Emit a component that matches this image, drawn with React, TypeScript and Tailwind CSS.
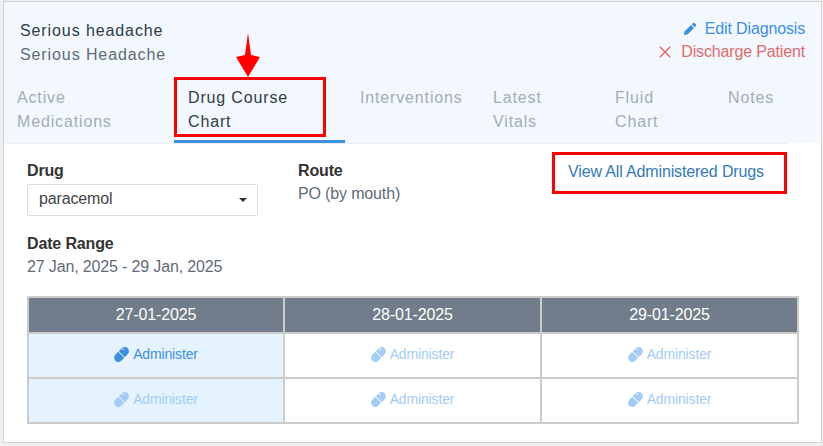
const TABS = [
  { label: "Active Medications", w: "w-[170px]", pad: "pl-[13px]" },
  { label: "Drug Course Chart", w: "w-[171px]", pad: "pl-[14px]", active: true },
  { label: "Interventions", w: "w-[134px]", pad: "pl-[15px]" },
  { label: "Latest Vitals", w: "w-[122px]", pad: "pl-[14px]" },
  { label: "Fluid Chart", w: "w-[113px]", pad: "pl-[14px]" },
  { label: "Notes", w: "w-[74px]", pad: "pl-[14px]" },
];

const DATES = ["27-01-2025", "28-01-2025", "29-01-2025"];

function PillIcon({ className }: { className: string }) {
  return (
    <svg viewBox="0 0 16 16" className={className} fill="currentColor">
      <g transform="rotate(-45 8 8)">
        <path d="M7.5 3.5H3.2a4.5 4.5 0 0 0 0 9h4.3z" />
        <path
          fillRule="evenodd"
          d="M8.5 3.5h4.3a4.5 4.5 0 0 1 0 9H8.500zM12.200 5.200a.9.9 0 1 0 1.800 0 .9.9 0 1 0-1.800 0z"
        />
      </g>
    </svg>
  );
}

function PencilIcon() {
  return (
    <svg viewBox="0 0 14 14" className="h-[14px] w-[14px]" fill="currentColor">
      <path d="M10 1a1 1 0 0 1 1.400 0l1.600 1.600a1 1 0 0 1 0 1.400l-1.200 1.200-3-3z" />
      <path d="M8 3l3 3-6.500 6.500-3.500.5.500-3.500z" />
    </svg>
  );
}

function CrossIcon() {
  return (
    <svg viewBox="0 0 12 12" className="h-[12px] w-[12px]" stroke="currentColor" strokeWidth="1.500" fill="none">
      <path d="M.8.8l10.400 10.400M11.200.8L.8 11.200" />
    </svg>
  );
}

function Cell({ active, strong }: { active?: boolean; strong?: boolean }) {
  return (
    <td className={`h-[45px] border-2 border-[#cccccc] p-0 pt-[2px] text-center ${active ? "bg-[#e4f3fe]" : "bg-white"}`}>
      <span className={`inline-flex items-center gap-[4px] text-[14px] ${strong ? "text-[#3d8fe0]" : "text-[#a3cdf4]"}`}>
        <PillIcon className="h-[15px] w-[15px]" />
        Administer
      </span>
    </td>
  );
}

export default function App() {
  return (
    <div className="relative h-[446px] w-[823px] overflow-hidden bg-[#f0f0f0] pl-[3px] pt-[1px] font-['Liberation_Sans',sans-serif] text-[16px] tracking-[-0.15px] text-[#5f6b78]">
      <div className="h-[442px] w-[819px] border border-[#d2d2d2] bg-white">
        <div className="h-[141px] bg-[#f2f8fe]">
          <div className="flex justify-between pl-[16px] pr-[16px] pt-[15px]">
            <div className="pt-[2px] leading-[24px] tracking-[0.9px]">
              <div className="text-[#2f3b47]">Serious headache</div>
              <div>Serious Headache</div>
            </div>
            <div className="flex flex-col items-end leading-[23px]">
              <span className="flex items-center gap-[8px] text-[#3d8fe0]">
                <PencilIcon />
                Edit Diagnosis
              </span>
              <span className="flex items-center gap-[10px] text-[#e06a6a]">
                <CrossIcon />
                Discharge Patient
              </span>
            </div>
          </div>
          <div className="mt-[19px] flex w-[784px] border-b border-[#e8eef3] leading-[24px] tracking-[0.85px]">
            {TABS.map((t) => (
              <div
                key={t.label}
                className={`${t.w} ${t.pad} h-[57px] shrink-0 border-b-[3px] pr-[30px] ${
                  t.active ? "border-[#3d8fe0] text-[#2f3b47]" : "border-transparent text-[#a3adb8]"
                }`}
              >
                {t.label}
              </div>
            ))}
          </div>
        </div>

        <div className="px-[23px] pt-[17px]">
          <div className="flex">
            <div className="w-[271px]">
              <div className="mb-[2px] font-bold leading-[22px] text-[#333333]">Drug</div>
              <div className="flex h-[32px] w-[231px] items-center justify-between rounded-[2px] border border-[#dddddd] pb-[2px] pl-[11px] pr-[10px] text-[#444444]">
                paracemol
                <span className="mt-[2px] h-0 w-0 border-x-[4px] border-t-[4px] border-x-transparent border-t-[#333333]" />
              </div>
            </div>
            <div>
              <div className="mb-[1px] font-bold leading-[22px] text-[#333333]">Route</div>
              <div className="leading-[22px]">PO (by mouth)</div>
            </div>
            <div className="ml-[168px] mt-[1px] leading-[22px] text-[#337ab7]">View All Administered Drugs</div>
          </div>

          <div className="mt-[17px] font-bold leading-[22px] text-[#333333]">Date Range</div>
          <div className="leading-[24px]">27 Jan, 2025 - 29 Jan, 2025</div>

          <table className="mt-[17px] w-[772px] table-fixed border-collapse">
            <thead>
              <tr>
                {DATES.map((d, i) => (
                  <th
                    key={d}
                    className={`h-[36px] border-2 border-[#cccccc] bg-[#717d8a] p-0 font-normal text-white ${
                      i === 0 ? "w-[256px]" : i === 1 ? "w-[257px]" : ""
                    }`}
                  >
                    {d}
                  </th>
                ))}
              </tr>
            </thead>
            <tbody>
              <tr>
                <Cell active strong />
                <Cell />
                <Cell />
              </tr>
              <tr>
                <Cell active />
                <Cell />
                <Cell />
              </tr>
            </tbody>
          </table>
        </div>
      </div>

      {/* red annotations drawn over the screenshot */}
      <div className="absolute left-[174px] top-[77px] h-[60px] w-[152px] border-[3px] border-[#ff0000]" />
      <div className="absolute left-[552px] top-[152px] h-[42px] w-[235px] border-[3px] border-[#ff0000]" />
      <svg className="absolute left-[236px] top-[33px] h-[45px] w-[25px]" viewBox="0 0 25 45" fill="#ff0000">
        <path d="M12 0 L15 22 L24 24 L12 44 L0 24 L9 22 Z" />
      </svg>
    </div>
  );
}
